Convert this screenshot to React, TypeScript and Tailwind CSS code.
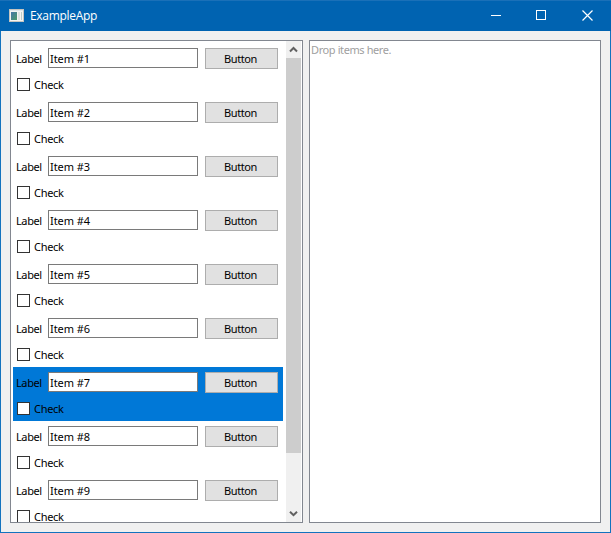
import React from 'react';

const items = [1, 2, 3, 4, 5, 6, 7, 8, 9];
const selected = 7;

function TitleBar() {
  return (
    <header className="flex h-[31px] shrink-0 items-center border-t border-[#1a70b8] bg-[#0063b1] pl-[9px] text-white">
      <svg width="15" height="13" viewBox="0 0 15 13" className="mb-px shrink-0">
        <defs>
          <linearGradient id="pane" x1="0" y1="0" x2="1" y2="1">
            <stop offset="0" stopColor="#4777a8" />
            <stop offset="1" stopColor="#4c9a68" />
          </linearGradient>
        </defs>
        <rect x="0.5" y="0.5" width="14" height="12" fill="#f4f4f2" stroke="#c4c4c0" />
        <rect x="1" y="1" width="13" height="1" fill="#dfe6ea" />
        <rect x="2" y="3" width="6" height="8" fill="url(#pane)" />
        <rect x="9" y="3" width="2" height="8" fill="#dfe3e1" />
        <rect x="12" y="3" width="1" height="8" fill="#bccbc6" />
      </svg>
      <h1 className="ml-1.5 font-['Open_Sans',sans-serif] text-[12px] leading-4 tracking-[-0.3px]">ExampleApp</h1>
      <div className="ml-auto flex h-full">
        <button className="flex w-[46px] items-center justify-center" aria-label="Minimize">
          <svg width="10" height="10" viewBox="0 0 10 10" shapeRendering="crispEdges" className="mb-1">
            <path d="M0 6.5H10" stroke="white" />
          </svg>
        </button>
        <button className="flex w-11 items-center justify-center" aria-label="Maximize">
          <svg width="10" height="10" viewBox="0 0 10 10" shapeRendering="crispEdges" className="mb-0.5">
            <rect x="0.5" y="0.5" width="9" height="9" fill="none" stroke="white" />
          </svg>
        </button>
        <button className="flex w-12 items-center justify-center" aria-label="Close">
          <svg width="11" height="11" viewBox="0 0 11 11" className="mb-0.5">
            <path d="M0.5 0.5L10.5 10.5M10.5 0.5L0.5 10.5" stroke="white" strokeWidth="1.2" />
          </svg>
        </button>
      </div>
    </header>
  );
}

function Row({ n }: { n: number }) {
  return (
    <li className={`h-[54px] w-[270px] shrink-0 pt-[5px] ${n === selected ? 'bg-[#0078d7]' : ''}`}>
      <div className="flex h-[21px] items-start">
        <span className="ml-[3px] w-8 shrink-0 leading-[21px] tracking-[-0.4px]">Label</span>
        <div className="h-5 w-[150px] border border-[#7a7a7a] bg-white pl-px leading-[20px] tracking-[-0.05px]">Item #{n}</div>
        <button className="ml-[7px] h-[21px] w-[73px] border border-[#adadad] bg-[#e1e1e1] pr-[2px] leading-[20px] tracking-[-0.42px]">Button</button>
      </div>
      <label className="mt-[9px] ml-1 flex h-[13px] items-center">
        <span className="size-[13px] border border-[#333333] bg-white" />
        <span className="ml-1 leading-[13px] tracking-[-0.3px]">Check</span>
      </label>
    </li>
  );
}

function ScrollBar() {
  return (
    <div className="ml-[3px] flex w-[15px] shrink-0 flex-col bg-[#f0f0f0]">
      <div className="flex h-[17px] shrink-0 items-center justify-center">
        <svg width="9" height="7" viewBox="0 0 9 7">
          <path d="M1 5.5L4.5 2L8 5.5" fill="none" stroke="#606060" strokeWidth="2" />
        </svg>
      </div>
      <div className="h-[395px] shrink-0 bg-[#cdcdcd]" />
      <div className="mt-auto flex h-[17px] shrink-0 items-center justify-center">
        <svg width="9" height="7" viewBox="0 0 9 7">
          <path d="M1 1.7L4.5 5.2L8 1.7" fill="none" stroke="#606060" strokeWidth="2" />
        </svg>
      </div>
    </div>
  );
}

export default function App() {
  return (
    <div className="flex h-[533px] w-[611px] flex-col overflow-hidden bg-[#f0f0f0] font-['Noto_Sans',sans-serif] text-[11px] text-black">
      <TitleBar />
      <main className="flex min-h-0 flex-1 gap-1.5 border-x border-b border-[#1373be] px-[9px] pt-[9px] pb-[9px]">
        <section className="flex w-[293px] shrink-0 overflow-hidden border border-[#828790] bg-white pl-0.5">
          <ul className="flex h-full w-[270px] shrink-0 flex-col overflow-hidden pt-0.5">
            {items.map((n) => (
              <Row key={n} n={n} />
            ))}
          </ul>
          <ScrollBar />
        </section>
        <section className="min-w-0 flex-1 border border-[#828790] bg-white pt-px pl-px leading-4 tracking-[-0.4px] text-[#a0a0a0]">
          Drop items here.
        </section>
      </main>
    </div>
  );
}
